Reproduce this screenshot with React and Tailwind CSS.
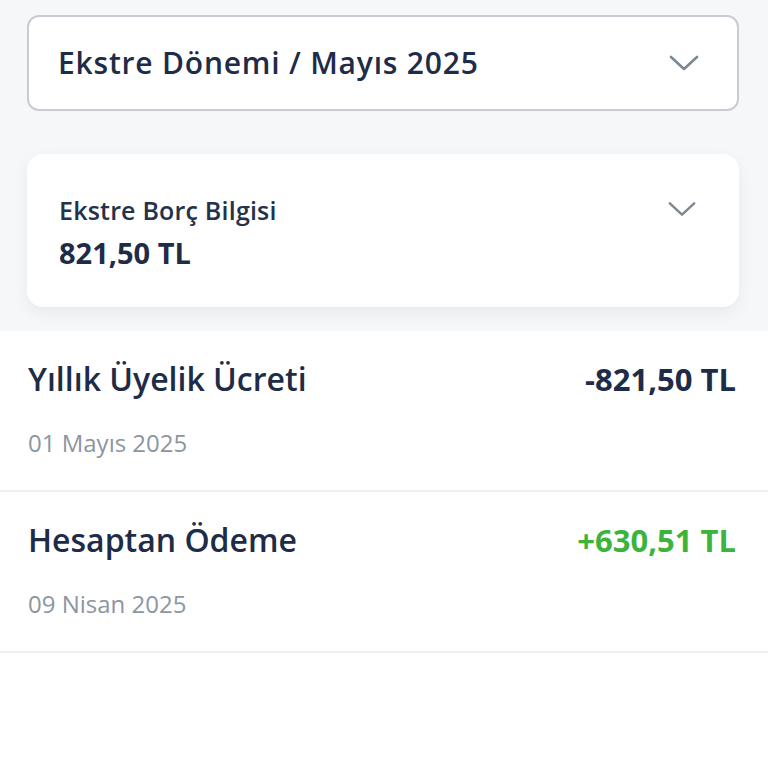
import React from "react";

function Chevron({ className }) {
  return (
    <svg className={className} viewBox="0 0 32 18" fill="none" stroke="currentColor" strokeWidth="2.6" strokeLinecap="round" strokeLinejoin="round">
      <path d="M3 3 L16 15 L29 3" />
    </svg>
  );
}

function Row({ title, date, amount, amountClass }) {
  return (
    <div className="flex flex-col h-[161px] border-b-2 border-[#eef0f3] pl-[28px] pr-[32px] pt-[28px]">
      <div className="flex items-center justify-between">
        <span className="text-[32px] font-[560] text-[#1e2c47] leading-[40px]">{title}</span>
        <span className={"text-[31px] font-bold leading-[40px] " + amountClass}>{amount}</span>
      </div>
      <span className="mt-[30px] text-[24px] text-[#8d959f] leading-[28px]">{date}</span>
    </div>
  );
}

export default function App() {
  return (
    <div className="w-[768px] h-[768px] bg-white overflow-hidden" style={{ fontFamily: '"Open Sans", "Noto Sans", sans-serif' }}>
      <div className="bg-[#f6f7f9] pl-[27px] pr-[29px] pt-[15px] pb-[24px] flex flex-col gap-[43px]">
        <div className="h-[96px] bg-white border-2 border-[#c9ccd2] rounded-[12px] flex items-center justify-between pl-[29px] pr-[37px]">
          <span className="text-[30px] font-semibold text-[#1e2c47] leading-none tracking-[0.8px]">Ekstre Dönemi / Mayıs 2025</span>
          <Chevron className="w-[32px] h-[18px] text-[#7d8793]" />
        </div>
        <div className="h-[153px] bg-white rounded-[16px] shadow-[0_6px_16px_rgba(0,0,0,0.06)] flex items-start justify-between pl-[32px] pr-[42px] pt-[40px]">
          <div className="flex flex-col">
            <span className="text-[25px] font-semibold text-[#24324a] leading-[32px] tracking-[0.2px]">Ekstre Borç Bilgisi</span>
            <span className="mt-[9px] text-[29px] font-bold text-[#1e2c47] leading-[36px]">821,50 TL</span>
          </div>
          <Chevron className="w-[30px] h-[18px] mt-[6px] text-[#7d8793]" />
        </div>
      </div>
      <Row title="Yıllık Üyelik Ücreti" date="01 Mayıs 2025" amount="-821,50 TL" amountClass="text-[#1e2c47]" />
      <Row title="Hesaptan Ödeme" date="09 Nisan 2025" amount="+630,51 TL" amountClass="text-[#3cb43c]" />
    </div>
  );
}
